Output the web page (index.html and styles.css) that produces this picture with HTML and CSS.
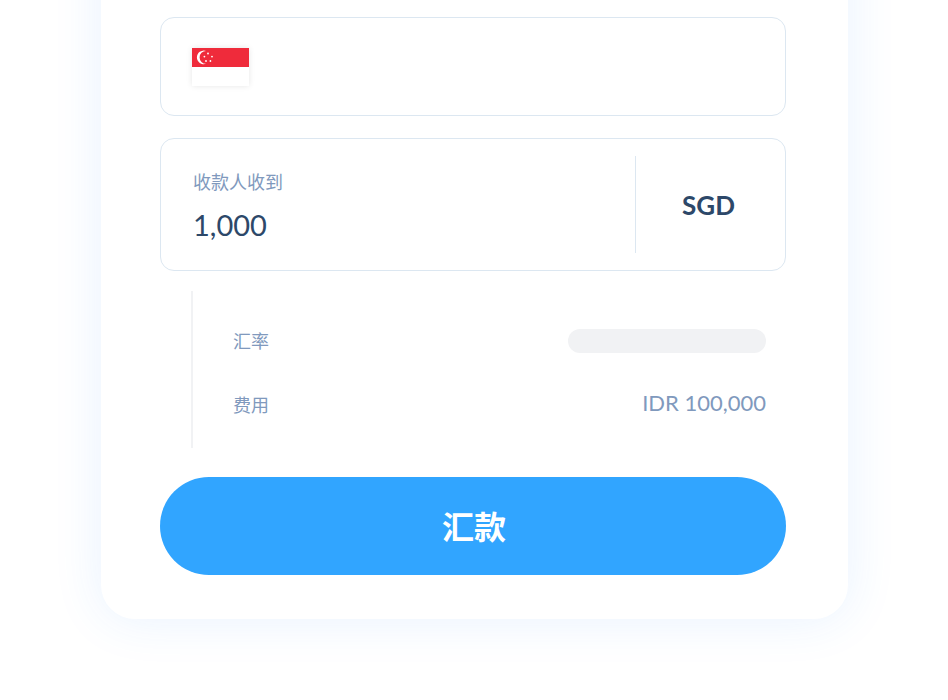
FILE: index.html
```html
<!DOCTYPE html>
<html lang="zh-CN">
<head>
  <meta charset="UTF-8">
  <meta name="viewport" content="width=device-width, initial-scale=1">
  <title>汇款</title>
  <link rel="stylesheet" href="styles.css">
</head>
<body>
  <form class="card">
    <button type="button" class="box country" aria-label="Singapore">
      <svg class="flag" viewBox="0 0 57 38" aria-hidden="true">
        <rect width="57" height="38" fill="#fff"/>
        <rect width="57" height="19" fill="#ef2b3b"/>
        <path d="M14 3A6.8 6.8 0 1 0 14 15.8A6.4 6.4 0 0 1 14 3Z" fill="#fff"/>
        <g fill="#fff">
          <circle cx="16" cy="5.5" r="0.9"/>
          <circle cx="12.4" cy="8.6" r="0.9"/>
          <circle cx="20" cy="8.6" r="0.9"/>
          <circle cx="14" cy="13" r="0.9"/>
          <circle cx="18.4" cy="13" r="0.9"/>
        </g>
      </svg>
    </button>

    <div class="box amount">
      <div class="amount-field">
        <label for="receive">收款人收到</label>
        <input id="receive" type="text" inputmode="decimal" value="1,000">
      </div>
      <button type="button" class="currency">SGD</button>
    </div>

    <dl class="details">
      <div class="row">
        <dt>汇率</dt>
        <dd><span class="skeleton"></span></dd>
      </div>
      <div class="row">
        <dt>费用</dt>
        <dd>IDR 100,000</dd>
      </div>
    </dl>

    <button type="submit" class="send">汇款</button>
  </form>
</body>
</html>
```
FILE: styles.css
```css
* {
  box-sizing: border-box;
}

body {
  margin: 0;
  padding: 0 100px 80px 101px;
  background: #fff;
  font-family: Lato, "Noto Sans CJK SC", sans-serif;
  color: #2d4869;
  overflow-x: hidden;
}

button, input {
  font-family: inherit;
  color: inherit;
  background: none;
  border: none;
  padding: 0;
}

button {
  cursor: pointer;
}

/* the top edge runs past the window */
.card {
  display: flex;
  flex-direction: column;
  margin-top: -80px;
  padding: 97px 62px 44px 59px;
  background: #fff;
  border-radius: 34px;
  box-shadow: 0 0 50px rgba(48, 140, 255, 0.11);
}

.box {
  display: flex;
  border: 1px solid #dce7f1;
  border-radius: 14px;
}

.country {
  align-items: center;
  height: 99px;
  padding: 0 31px;
  margin-bottom: 22px;
}

.flag {
  width: 57px;
  height: 38px;
  box-shadow: 0 0 6px rgba(0, 0, 0, 0.1);
}

.amount {
  padding: 17px 0;
  margin-bottom: 20px;
}

.amount-field {
  flex: 1;
  display: flex;
  flex-direction: column;
  min-width: 0;
  padding: 12px 32px 1px;
}

.amount-field label {
  font-size: 18px;
  line-height: 28px;
  color: #8099bd;
}

.amount-field input {
  width: 100%;
  height: 56px;
  font-size: 29px;
}

.currency {
  width: 150px;
  padding-right: 4px;
  border-left: 1px solid #dce7f1;
  font-size: 26px;
  font-weight: 700;
}

.details {
  display: flex;
  flex-direction: column;
  gap: 36px;
  margin: 0 20px 29px 31px;
  padding: 36px 0 29px 40px;
  border-left: 2px solid #f1f2f4;
  color: #8099bd;
}

.row {
  display: flex;
  justify-content: space-between;
  height: 28px;
}

.row dt {
  font-size: 18px;
  line-height: 28px;
}

.row dd {
  margin: 0;
  font-size: 22px;
  line-height: 24px;
}

.skeleton {
  display: block;
  width: 198px;
  height: 24px;
  margin-top: 2px;
  border-radius: 12px;
  background: #f1f2f4;
}

.send {
  height: 98px;
  padding: 0 0 2px 2px;
  border-radius: 49px;
  background: #31a5ff;
  color: #fff;
  font-size: 32px;
  font-weight: 700;
}
```
